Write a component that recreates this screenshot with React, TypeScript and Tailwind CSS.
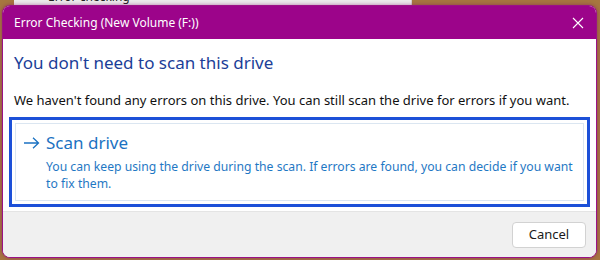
import React from "react";

const font = { fontFamily: '"Noto Sans", "Open Sans", sans-serif' };

export default function App() {
  return (
    <div
      className="relative w-[600px] h-[260px] overflow-hidden bg-[#a7773f]"
      style={font}
    >
      {/* window behind the dialog */}
      <div className="absolute left-[14px] top-[-10px] w-[398px] h-[18px] bg-[#ececec] border-r border-[#d0d0d0]">
        <div className="pl-[34px] text-[12px] leading-[14px] text-[#222]">Error checking</div>
      </div>

      <div className="absolute left-[2px] top-[5px] w-[595px] h-[253px] flex flex-col rounded-lg overflow-hidden border border-[#9a1286] bg-white shadow-[0_0_4px_rgba(120,0,100,0.5)]">
        <div className="h-[33px] shrink-0 bg-[#9c048a] flex items-center justify-between pl-[11px] pr-[10px]">
          <span className="text-[12px] text-white">Error Checking (New Volume (F:))</span>
          <svg width="12" height="12" viewBox="0 0 12 12" className="mr-[2px]">
            <path d="M1 1 L11 11 M11 1 L1 11" stroke="white" strokeWidth="1.1" />
          </svg>
        </div>

        <div className="flex-1 flex flex-col px-[6px]">
          <h1 className="mt-[13px] pl-[5px] text-[17px] leading-[22px] text-[#1b3e98]">
            You don't need to scan this drive
          </h1>
          <p className="mt-[17px] pl-[5px] text-[13px] leading-[18px] text-[#111]">
            We haven't found any errors on this drive. You can still scan the drive for errors if you want.
          </p>
          <div className="mt-[8px] border-[3px] border-[#1c50d8] p-[3px]">
            <div className="border border-[#dbe6f1] pl-[6px] pr-[1px] pt-[7px] pb-[8px] text-[#1b72c2]">
              <div className="flex items-center gap-[6px] text-[17px] leading-[24px]">
                <svg width="17" height="12" viewBox="0 0 17 12" className="ml-[1px]">
                  <path d="M1 6 H15.5 M10 0.8 L15.5 6 L10 11.2" fill="none" stroke="#1b72c2" strokeWidth="1.3" />
                </svg>
                <span>Scan drive</span>
              </div>
              <p className="mt-[3px] pl-[24px] text-[12.2px] leading-[17px] text-[#1f78c4]">
                You can keep using the drive during the scan. If errors are found, you can decide if you want to fix them.
              </p>
            </div>
          </div>
        </div>

        <div className="h-[46px] shrink-0 bg-[#f0f0f0] border-t border-[#e4e4e4] flex items-center justify-end pr-[10px]">
          <button className="w-[74px] h-[26px] rounded-[4px] border border-[#d2d2d2] bg-white text-[13px] text-[#1a1a1a]">
            Cancel
          </button>
        </div>
      </div>
    </div>
  );
}
